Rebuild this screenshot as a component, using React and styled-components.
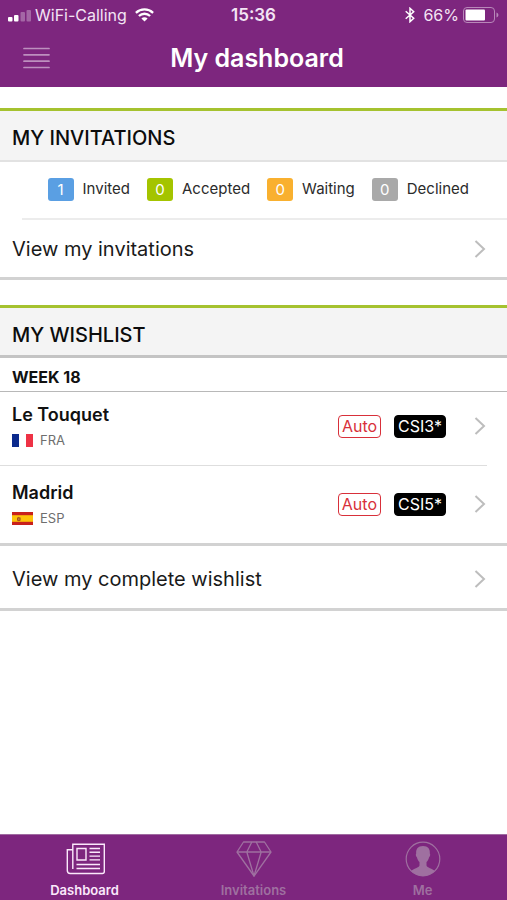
import React from 'react';
import styled, { createGlobalStyle } from 'styled-components';

const purple = '#7d267e';
const green = '#a5c22f';

const GlobalStyle = createGlobalStyle`
  *, *::before, *::after { box-sizing: border-box; }
  body { margin: 0; background: #fff; }
  button { font: inherit; color: inherit; border: 0; padding: 0; background: none; cursor: pointer; }
  h1, h2, h3, h4, ul { margin: 0; padding: 0; list-style: none; }
  a { color: inherit; text-decoration: none; }
`;

const Page = styled.div`
  display: flex;
  flex-direction: column;
  min-height: 100vh;
  font-family: Inter, 'Liberation Sans', sans-serif;
  color: #1a1a1a;
`;

const Header = styled.header`
  background: ${purple};
  color: #fff;
`;

const StatusBar = styled.div`
  display: grid;
  grid-template-columns: 1fr auto 1fr;
  align-items: center;
  height: 30px;
  padding: 0 8px;
  font-size: 16px;
  line-height: 20px;
  color: #f3e4f4;
`;

const StatusGroup = styled.div`
  display: flex;
  align-items: center;
  justify-content: ${(p) => (p.$end ? 'flex-end' : 'flex-start')};
  gap: ${(p) => (p.$wide ? 8 : 4)}px;
`;

const Carrier = styled(StatusGroup)`
  gap: 8px;
`;

const Clock = styled.time`
  font-size: 17px;
  font-weight: 600;
`;

const NavBar = styled.div`
  display: grid;
  grid-template-columns: 65px 1fr 58px;
  align-items: center;
  height: 57px;
  padding-bottom: 2px;
`;

const MenuButton = styled.button`
  justify-self: start;
  display: flex;
  margin-left: 15px;
  padding: 8px;
`;

const Title = styled.h1`
  text-align: center;
  font-size: 25px;
  line-height: 32px;
  font-weight: 600;
`;

const Main = styled.main`
  flex: 1;
  display: flex;
  flex-direction: column;
  gap: 25px;
  padding-top: 21px;
`;

const Section = styled.section`
  display: flex;
  flex-direction: column;
`;

const SectionHeading = styled.h2`
  padding: 13px 12px ${(p) => (p.$strong ? 6 : 8)}px;
  border-top: 3px solid ${green};
  border-bottom: ${(p) => (p.$strong ? '3px solid #c4c4c4' : '2px solid #e2e2e2')};
  background: #f4f4f4;
  color: #0c0c0c;
  font-size: 20px;
  line-height: 28px;
  font-weight: 500;
  -webkit-text-stroke: 0;
`;

const StatusList = styled.ul`
  display: flex;
  justify-content: flex-end;
  gap: 17px;
  margin-left: 22px;
  padding: 15px 38px 17px 0;
  border-bottom: 2px solid #ececec;
`;

const StatusItem = styled.li`
  display: flex;
  align-items: center;
  gap: 9px;
  font-size: 15px;
  line-height: 24px;
  color: #2b2b2b;
`;

const Count = styled.span`
  width: 26px;
  border-radius: 3px;
  background: ${(p) => p.$color};
  color: #fff;
  text-align: center;
  line-height: 23px;
`;

const LinkRow = styled.a`
  display: flex;
  align-items: center;
  justify-content: space-between;
  padding: ${(p) => (p.$spaced ? '19px 20px 15px 12px' : '15px 20px 14px 12px')};
  border-bottom: 3px solid #d2d2d2;
  font-size: 20px;
  line-height: 28px;
`;

const WeekHeading = styled.h3`
  padding: 9px 12px 4px;
  border-bottom: 1px solid #b8b8b8;
  color: #111;
  font-size: 16px;
  line-height: 20px;
  font-weight: 700;
`;

const EventLink = styled.a`
  display: flex;
  align-items: center;
  padding: 13px 20px 14px 12px;
`;

const EventItem = styled.li`
  &:first-child ${EventLink} {
    padding-top: 9px;
  }

  & + &::before {
    content: '';
    display: block;
    height: 1px;
    margin-right: 20px;
    background: #dedede;
  }
`;

const EventList = styled.ul`
  border-bottom: 3px solid #d2d2d2;
`;

const EventInfo = styled.div`
  flex: 1;
`;

const EventName = styled.h4`
  color: #111;
  font-size: 18px;
  line-height: 27px;
  font-weight: 600;
`;

const Country = styled.div`
  display: flex;
  align-items: center;
  gap: 7px;
  padding-top: 1px;
  color: #6e6e6e;
  font-size: 13px;
  line-height: 22px;
`;

const Tags = styled.div`
  display: flex;
  align-items: center;
  gap: 13px;
  margin-right: 28px;
  font-size: 16px;
  line-height: 21px;
`;

const Tag = styled.span`
  padding: 0 3px;
  border: 1px solid ${(p) => (p.$solid ? '#000' : '#d8303a')};
  border-radius: 4px;
  background: ${(p) => (p.$solid ? '#000' : '#fff')};
  color: ${(p) => (p.$solid ? '#fff' : '#d8303a')};
`;

const TabBar = styled.nav`
  display: grid;
  grid-template-columns: repeat(3, 1fr);
  position: sticky;
  bottom: 0;
  border-top: 1px solid #a06ba1;
  background: ${purple};
`;

const Tab = styled.a`
  display: flex;
  flex-direction: column;
  align-items: center;
  gap: 4px;
  padding: 6px 0 1px;
  color: ${(p) => (p.$active ? '#fbe9fb' : '#9f70a0')};
  font-size: 13px;
  line-height: 18px;
  font-weight: 600;
`;

function Signal() {
  return (
    <svg width="23" height="13" viewBox="0 0 23 13" fill="#fff" aria-hidden="true">
      <rect x="0" y="8" width="4.500" height="4.500" rx="1" />
      <rect x="6" y="6" width="4.500" height="6.500" rx="1" />
      <rect x="12.500" y="3" width="4.500" height="9.500" rx="1" opacity=".3" />
      <rect x="18.500" y="1" width="4.500" height="11.500" rx="1" opacity=".3" />
    </svg>
  );
}

function Wifi() {
  return (
    <svg width="19" height="14" viewBox="0 0 19 14" fill="none" stroke="#fff" strokeWidth="2.300" aria-hidden="true">
      <path d="M.9 4.800C5.800.2 13.200.2 18.100 4.800M3.900 8c3.200-3 8-3 11.200 0" />
      <path d="M9.500 13.600 6.400 10.400c1.700-1.600 4.500-1.600 6.200 0Z" fill="#fff" stroke="none" />
    </svg>
  );
}

function Bluetooth() {
  return (
    <svg width="10" height="16" viewBox="0 0 10 16" fill="none" stroke="#fff" strokeWidth="1.500" aria-hidden="true">
      <path d="m.7 4.300 8 7L5 14.700V1.300l3.700 3.400-8 7" />
    </svg>
  );
}

function Battery() {
  return (
    <svg width="36" height="16" viewBox="0 0 36 16" aria-hidden="true">
      <rect x=".5" y=".5" width="31" height="15" rx="3.500" fill="none" stroke="#b888b9" />
      <rect x="2.500" y="2.500" width="19.500" height="11" rx="1" fill="#fff" />
      <path d="M33.500 5.500c2.500 1 2.500 4 0 5Z" fill="#b888b9" />
    </svg>
  );
}

function MenuLines() {
  return (
    <svg width="27" height="22" viewBox="0 0 27 22" stroke="#bd8fbe" strokeWidth="1.700" strokeLinecap="round" aria-hidden="true">
      <path d="M1 1.500h25M1 7.800h25M1 14.200h25M1 20.500h25" />
    </svg>
  );
}

function Chevron() {
  return (
    <svg width="13" height="18" viewBox="0 0 13 18" fill="none" stroke="#bdbdbd" strokeWidth="2" aria-hidden="true">
      <path d="m1.500 1 8.500 8-8.500 8" />
    </svg>
  );
}

function FlagFrance() {
  return (
    <svg width="21" height="13" viewBox="0 0 21 13" aria-hidden="true">
      <path fill="#fff" d="M0 0h21v13H0z" />
      <path fill="#0b2a8d" d="M0 0h7v13H0z" />
      <path fill="#ee3245" d="M14 0h7v13h-7z" />
    </svg>
  );
}

function FlagSpain() {
  return (
    <svg width="21" height="13" viewBox="0 0 21 13" aria-hidden="true">
      <path fill="#c8201c" d="M0 0h21v13H0z" />
      <path fill="#fdc30a" d="M0 3.200h21v6.600H0z" />
      <path fill="#a5501b" d="M5 5.500h1l.8-.8.8.8h1v3L7 9.200 5 8.500z" />
      <path fill="#d99a4b" d="M6.200 6.500h1.200v1.300H6.200z" />
    </svg>
  );
}

function NewspaperIcon() {
  return (
    <svg width="40" height="36" viewBox="0 -2 40 36" fill="none" stroke="currentColor" strokeWidth="1.400" aria-hidden="true">
      <path d="M7.800 26V1.200h31.500v27.300a2 2 0 0 1-2 2H5.300a3 3 0 0 1-3-3V6.800h5.500" />
      <path d="M12 5.500h9v11.500h-9z" />
      <path d="M24.500 5.500h10.500M24.500 9.300h10.500M24.500 13.100h10.500M24.500 16.900h10.500M11.500 21.500h23.500M11.500 25.500h23.500" />
    </svg>
  );
}

function DiamondIcon() {
  return (
    <svg width="36" height="36" viewBox="0 0 36 36" fill="none" stroke="currentColor" strokeWidth="1.300" strokeLinejoin="round" aria-hidden="true">
      <path d="M7.500 1h21L35 11 18 35 1 11Z" />
      <path d="M1 11h34M15.800 1 10.800 11 18 35l7.200-24-5-10" />
    </svg>
  );
}

function PersonIcon() {
  return (
    <svg width="36" height="36" viewBox="0 0 36 36" aria-hidden="true">
      <circle cx="18" cy="18" r="16.800" fill="none" stroke="currentColor" strokeWidth="1.200" />
      <path
        fill="currentColor"
        d="M18 5c-5 0-7.300 3-6.800 7.500-.8.600-.3 3.300.8 3.900.5 2 1.300 3.400 2.500 4.600v3.500c-.4 2.200-6 3-8.500 5.500A17 17 0 0 0 18 35a17 17 0 0 0 12-5c-2.500-2.500-8.100-3.300-8.500-5.500V21c1.200-1.200 2-2.600 2.500-4.600 1.100-.6 1.600-3.300.8-3.900C25.300 8 23 5 18 5Z"
      />
    </svg>
  );
}

const statuses = [
  { label: 'Invited', count: 1, color: '#5a9fe3' },
  { label: 'Accepted', count: 0, color: '#a4c400' },
  { label: 'Waiting', count: 0, color: '#f9b02f' },
  { label: 'Declined', count: 0, color: '#a9a9a9' },
];

const events = [
  { name: 'Le Touquet', country: 'FRA', level: 'CSI3*', Flag: FlagFrance },
  { name: 'Madrid', country: 'ESP', level: 'CSI5*', Flag: FlagSpain },
];

const tabs = [
  { label: 'Dashboard', Icon: NewspaperIcon, active: true },
  { label: 'Invitations', Icon: DiamondIcon },
  { label: 'Me', Icon: PersonIcon },
];

export default function App() {
  return (
    <Page>
      <GlobalStyle />
      <Header>
        <StatusBar>
          <Carrier>
            <StatusGroup>
              <Signal />
              <span>WiFi-Calling</span>
            </StatusGroup>
            <Wifi />
          </Carrier>
          <Clock>15:36</Clock>
          <StatusGroup $end $wide>
            <Bluetooth />
            <StatusGroup>
              <span>66%</span>
              <Battery />
            </StatusGroup>
          </StatusGroup>
        </StatusBar>
        <NavBar>
          <MenuButton type="button" aria-label="Menu">
            <MenuLines />
          </MenuButton>
          <Title>My dashboard</Title>
        </NavBar>
      </Header>
      <Main>
        <Section>
          <SectionHeading>MY INVITATIONS</SectionHeading>
          <StatusList>
            {statuses.map(({ label, count, color }) => (
              <StatusItem key={label}>
                <Count $color={color}>{count}</Count>
                {label}
              </StatusItem>
            ))}
          </StatusList>
          <LinkRow href="#invitations">
            View my invitations
            <Chevron />
          </LinkRow>
        </Section>
        <Section>
          <SectionHeading $strong>MY WISHLIST</SectionHeading>
          <WeekHeading>WEEK 18</WeekHeading>
          <EventList>
            {events.map(({ name, country, level, Flag }) => (
              <EventItem key={name}>
                <EventLink href={`#${country}`}>
                  <EventInfo>
                    <EventName>{name}</EventName>
                    <Country>
                      <Flag />
                      {country}
                    </Country>
                  </EventInfo>
                  <Tags>
                    <Tag>Auto</Tag>
                    <Tag $solid>{level}</Tag>
                  </Tags>
                  <Chevron />
                </EventLink>
              </EventItem>
            ))}
          </EventList>
          <LinkRow href="#wishlist" $spaced>
            View my complete wishlist
            <Chevron />
          </LinkRow>
        </Section>
      </Main>
      <TabBar>
        {tabs.map(({ label, Icon, active }) => (
          <Tab key={label} href={`#${label}`} $active={active} aria-current={active ? 'page' : undefined}>
            <Icon />
            {label}
          </Tab>
        ))}
      </TabBar>
    </Page>
  );
}
